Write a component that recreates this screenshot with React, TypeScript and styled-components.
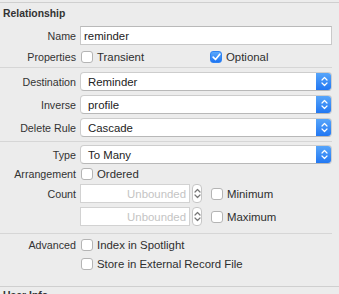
import React from "react";
import styled, { createGlobalStyle } from "styled-components";

const Global = createGlobalStyle`
  html, body { margin: 0; padding: 0; background: #ececec; }
  body { font-family: "Liberation Sans", Arial, sans-serif; font-size: 11.4px; color: #2e2e2e; }
  * { box-sizing: border-box; }
`;

const Panel = styled.div`
  width: 339px;
  height: 294px;
  overflow: hidden;
  background: #ececec;
  display: flex;
  flex-direction: column;
`;

const OuterRule = styled.div<{ $mt: number }>`
  height: 1px;
  flex: none;
  background: #cfcfcf;
  margin-top: ${(p) => p.$mt}px;
`;

const InnerRule = styled.div<{ $mt: number; $mb: number }>`
  height: 1px;
  flex: none;
  width: 332px;
  background: #d6d6d6;
  margin-top: ${(p) => p.$mt}px;
  margin-bottom: ${(p) => p.$mb}px;
`;

const Header = styled.div<{ $mt: number }>`
  font-weight: bold;
  font-size: 10.4px;
  line-height: 14px;
  padding-left: 3px;
  color: #333;
  flex: none;
  margin-top: ${(p) => p.$mt}px;
`;

const Row = styled.div<{ $mt?: number; $h?: number }>`
  display: grid;
  grid-template-columns: 76px 1fr;
  column-gap: 4px;
  align-items: center;
  flex: none;
  height: ${(p) => p.$h ?? 19}px;
  margin-top: ${(p) => p.$mt ?? 0}px;
  width: 332px;
`;

const Label = styled.div`
  text-align: right;
  white-space: nowrap;
  font-size: 10.7px;
  color: #333;
`;

const Controls = styled.div`
  display: flex;
  align-items: center;
  height: 100%;
  min-width: 0;
`;

const TextField = styled.div`
  flex: 1;
  height: 19px;
  background: #fff;
  border: 1px solid #c9c9c9;
  border-top-color: #b9b9b9;
  display: flex;
  align-items: center;
  padding-left: 3px;
  color: #222;
`;

const NumberField = styled.div`
  width: 110px;
  height: 19px;
  background: #fff;
  border: 1px solid #d2d2d2;
  display: flex;
  align-items: center;
  justify-content: flex-end;
  padding-right: 3px;
  color: #c4c4c4;
`;

const Popup = styled.div`
  flex: 1;
  height: 19px;
  background: #fff;
  border: 1px solid #cdcdcd;
  border-bottom-color: #b8b8b8;
  border-radius: 4px;
  display: flex;
  align-items: center;
  padding-left: 7px;
  position: relative;
  color: #222;
  overflow: hidden;
`;

const PopupArrows = styled.div`
  position: absolute;
  right: -1px;
  top: -1px;
  bottom: -1px;
  width: 16px;
  border-radius: 0 4px 4px 0;
  background: linear-gradient(#5aa8fb, #1f75f2);
  display: flex;
  align-items: center;
  justify-content: center;
`;

const Stepper = styled.div`
  width: 10px;
  height: 19px;
  margin-left: 2px;
  border: 1px solid #c6c6c6;
  border-radius: 4px;
  background: #fff;
  display: flex;
  align-items: center;
  justify-content: center;
`;

const Check = styled.span<{ $on?: boolean }>`
  width: 12px;
  height: 12px;
  flex: none;
  border-radius: 3px;
  border: 1px solid ${(p) => (p.$on ? "#2f83f3" : "#b4b4b4")};
  background: ${(p) => (p.$on ? "linear-gradient(#5aa8fb, #1f75f2)" : "#fff")};
  display: inline-flex;
  align-items: center;
  justify-content: center;
  margin-left: 1px;
`;

const CheckItem = styled.label<{ $w?: number; $ml?: number }>`
  display: inline-flex;
  align-items: center;
  gap: 4px;
  width: ${(p) => (p.$w ? `${p.$w}px` : "auto")};
  margin-left: ${(p) => p.$ml ?? 0}px;
  color: #2e2e2e;
  white-space: nowrap;
`;

const Chevrons = ({ color }: { color: string }) => (
  <svg width="7" height="11" viewBox="0 0 7 11">
    <path d="M1 4 L3.5 1.5 L6 4" fill="none" stroke={color} strokeWidth="1.2" strokeLinecap="round" strokeLinejoin="round" />
    <path d="M1 7 L3.5 9.5 L6 7" fill="none" stroke={color} strokeWidth="1.2" strokeLinecap="round" strokeLinejoin="round" />
  </svg>
);

const Tick = () => (
  <svg width="9" height="8" viewBox="0 0 9 8">
    <path d="M1.2 4.2 L3.5 6.5 L7.8 1.2" fill="none" stroke="#fff" strokeWidth="1.7" strokeLinecap="round" strokeLinejoin="round" />
  </svg>
);

const Box = ({ on }: { on?: boolean }) => <Check $on={on}>{on ? <Tick /> : null}</Check>;

const PopupButton = ({ value }: { value: string }) => (
  <Popup>
    {value}
    <PopupArrows>
      <Chevrons color="#fff" />
    </PopupArrows>
  </Popup>
);

const CountRow = ({ mt, label, check }: { mt: number; label: string; check: string }) => (
  <Row $mt={mt}>
    <Label>{label}</Label>
    <Controls>
      <NumberField>Unbounded</NumberField>
      <Stepper>
        <Chevrons color="#777" />
      </Stepper>
      <CheckItem $ml={8}>
        <Box />
        {check}
      </CheckItem>
    </Controls>
  </Row>
);

export default function App() {
  return (
    <>
      <Global />
      <Panel>
        <OuterRule $mt={2} />
        <Header $mt={4}>Relationship</Header>
        <Row $mt={5}>
          <Label>Name</Label>
          <Controls>
            <TextField>reminder</TextField>
          </Controls>
        </Row>
        <Row $mt={4} $h={16}>
          <Label>Properties</Label>
          <Controls>
            <CheckItem $w={129}>
              <Box />
              Transient
            </CheckItem>
            <CheckItem>
              <Box on />
              Optional
            </CheckItem>
          </Controls>
        </Row>
        <InnerRule $mt={2} $mb={4} />
        <Row>
          <Label>Destination</Label>
          <Controls>
            <PopupButton value="Reminder" />
          </Controls>
        </Row>
        <Row $mt={4}>
          <Label>Inverse</Label>
          <Controls>
            <PopupButton value="profile" />
          </Controls>
        </Row>
        <Row $mt={4}>
          <Label>Delete Rule</Label>
          <Controls>
            <PopupButton value="Cascade" />
          </Controls>
        </Row>
        <InnerRule $mt={4} $mb={3} />
        <Row>
          <Label>Type</Label>
          <Controls>
            <PopupButton value="To Many" />
          </Controls>
        </Row>
        <Row $mt={2} $h={16}>
          <Label>Arrangement</Label>
          <Controls>
            <CheckItem>
              <Box />
              Ordered
            </CheckItem>
          </Controls>
        </Row>
        <CountRow mt={2} label="Count" check="Minimum" />
        <CountRow mt={4} label="" check="Maximum" />
        <InnerRule $mt={7} $mb={3} />
        <Row $h={16}>
          <Label>Advanced</Label>
          <Controls>
            <CheckItem>
              <Box />
              Index in Spotlight
            </CheckItem>
          </Controls>
        </Row>
        <Row $mt={3} $h={16}>
          <Label></Label>
          <Controls>
            <CheckItem>
              <Box />
              Store in External Record File
            </CheckItem>
          </Controls>
        </Row>
        <OuterRule $mt={14} />
        <Header $mt={2}>User Info</Header>
      </Panel>
    </>
  );
}
